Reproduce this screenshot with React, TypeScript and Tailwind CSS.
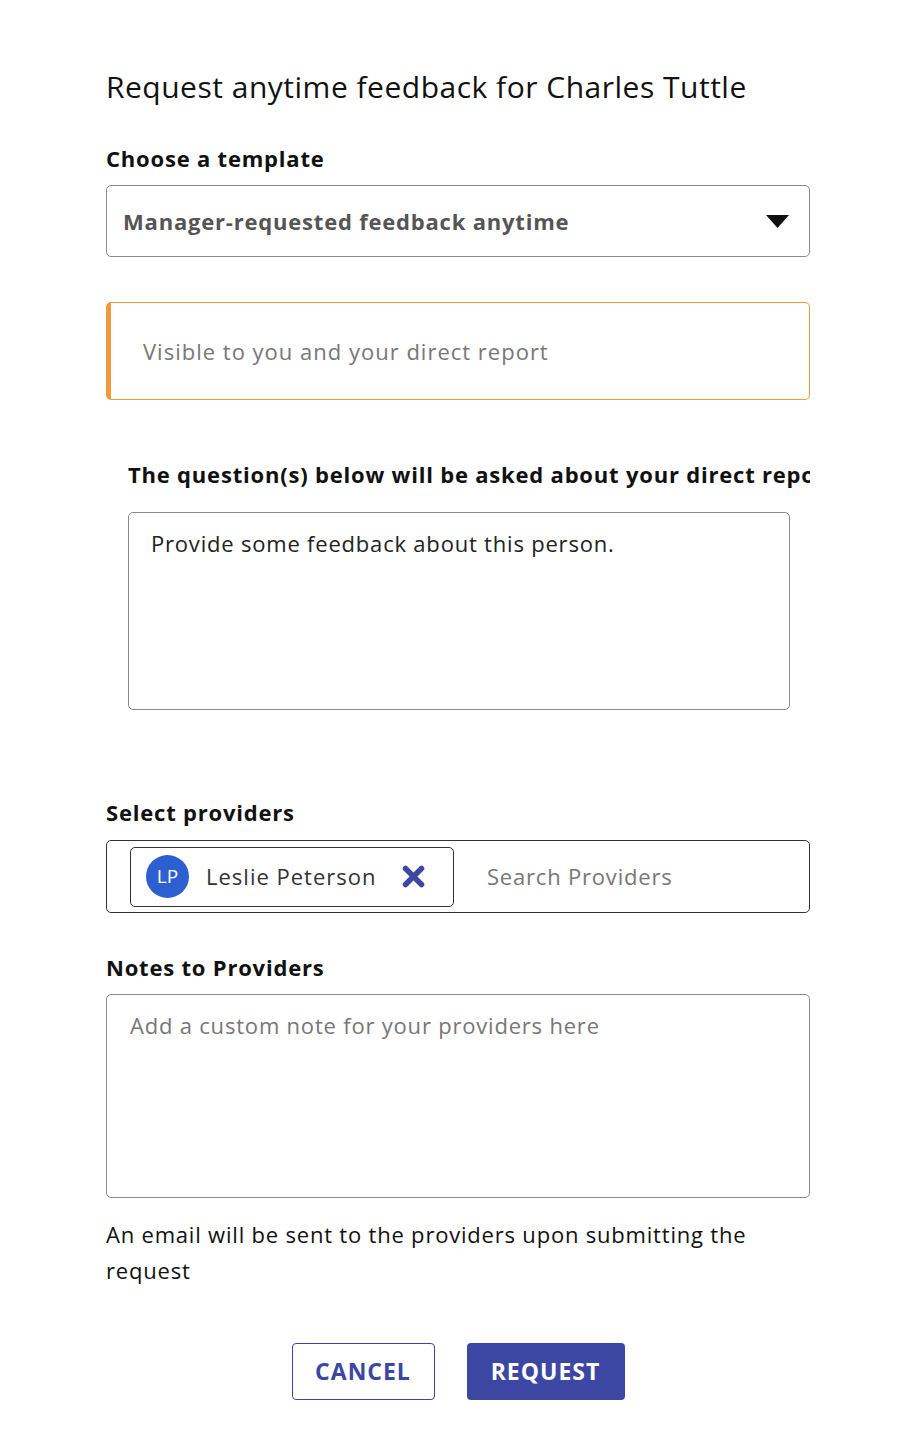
import React from "react";

export default function App() {
  const font = { fontFamily: "'Open Sans', Lato, sans-serif" };
  return (
    <div className="w-[916px] h-[1450px] bg-white text-[#111]" style={font}>
      <div className="pl-[106px] pr-[106px] pt-[68px]">
        <h1 className="text-[30px] leading-[38px] font-normal tracking-[0.5px] text-[#111]">
          Request anytime feedback for Charles Tuttle
        </h1>
        <div className="mt-[38px] text-[22px] leading-[28px] font-bold tracking-[0.8px]">Choose a template</div>
        <div className="mt-[13px] h-[72px] border border-[#8a8a8a] rounded-[5px] flex items-center justify-between pl-[16px] pr-[20px]">
          <span className="text-[22px] font-bold tracking-[0.8px] text-[#555]">Manager-requested feedback anytime</span>
          <svg width="23" height="13" viewBox="0 0 23 13">
            <polygon points="0,0 23,0 11.5,13" fill="#111" />
          </svg>
        </div>
        <div className="mt-[45px] h-[98px] border border-[#f29a3b] border-l-[5px] rounded-[5px] flex items-center pl-[32px]">
          <span className="text-[22px] tracking-[1px] text-[#777]">Visible to you and your direct report</span>
        </div>
        <div className="mt-[60px] pl-[22px] overflow-hidden">
          <div className="text-[22px] leading-[28px] font-bold tracking-[0.8px] whitespace-nowrap">
            The question(s) below will be asked about your direct report
          </div>
          <div className="mt-[24px] w-[662px] h-[198px] border border-[#8a8a8a] rounded-[5px] px-[22px] pt-[14px]">
            <span className="text-[22px] tracking-[0.8px] text-[#222]">Provide some feedback about this person.</span>
          </div>
        </div>
        <div className="mt-[88px] text-[22px] leading-[28px] font-bold tracking-[0.8px]">Select providers</div>
        <div className="mt-[14px] h-[73px] border border-[#333] rounded-[5px] flex items-center pl-[23px]">
          <div className="h-[60px] w-[324px] border border-[#333] rounded-[5px] flex items-center pl-[15px]">
            <div className="w-[43px] h-[43px] rounded-full bg-[#2c5fcf] flex items-center justify-center text-white text-[19px]">
              LP
            </div>
            <span className="ml-[17px] text-[22px] tracking-[1px] text-[#333]">Leslie Peterson</span>
            <svg className="ml-[26px]" width="23" height="23" viewBox="0 0 23 23">
              <path d="M3.5 3.5 L19.5 19.5 M19.5 3.5 L3.5 19.5" stroke="#3c47a3" strokeWidth="5.5" strokeLinecap="round" />
            </svg>
          </div>
          <span className="ml-[33px] text-[22px] tracking-[0.8px] text-[#777]">Search Providers</span>
        </div>
        <div className="mt-[40px] text-[22px] leading-[28px] font-bold tracking-[0.8px]">Notes to Providers</div>
        <div className="mt-[13px] h-[204px] border border-[#8a8a8a] rounded-[5px] px-[23px] pt-[14px]">
          <span className="text-[22px] tracking-[0.8px] text-[#777]">Add a custom note for your providers here</span>
        </div>
        <p className="mt-[18px] text-[22px] leading-[36px] tracking-[0.8px] text-[#111]">
          An email will be sent to the providers upon submitting the request
        </p>
        <div className="mt-[55px] flex justify-center gap-[32px]">
          <button className="w-[143px] h-[57px] border border-[#3c47a3] rounded-[4px] text-[#3c47a3] text-[23px] tracking-[1px] font-bold bg-white">
            CANCEL
          </button>
          <button className="w-[158px] h-[57px] rounded-[4px] bg-[#3c47a3] text-white text-[23px] tracking-[1px] font-bold">
            REQUEST
          </button>
        </div>
      </div>
    </div>
  );
}
